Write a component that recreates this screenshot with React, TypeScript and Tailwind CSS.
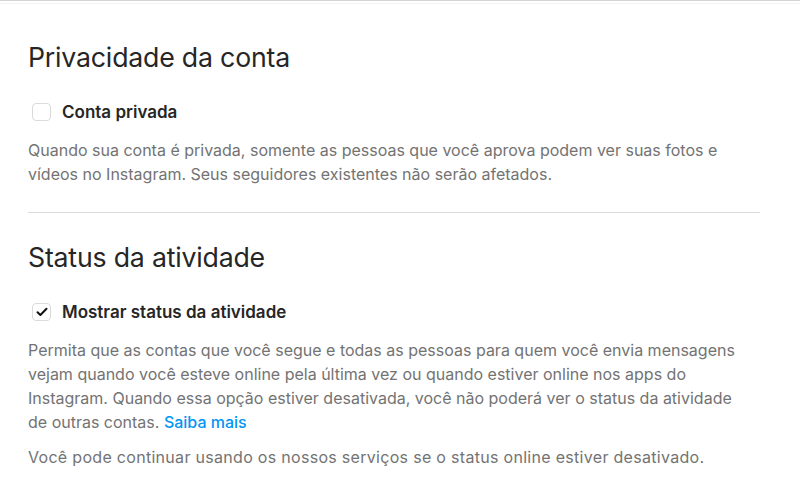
import React from "react";

function Box({ checked }: { checked?: boolean }) {
  return (
    <span className="flex h-[18px] w-[19px] shrink-0 items-center justify-center rounded-[4px] border border-[#dbdbdb] bg-white">
      {checked && (
        <svg width="12" height="10" viewBox="0 0 12 10" fill="none">
          <path d="M1.5 5.2 4.4 8 10.5 1.8" stroke="#111" strokeWidth="2" strokeLinecap="round" strokeLinejoin="round" />
        </svg>
      )}
    </span>
  );
}

export default function App() {
  return (
    <div className="min-h-[492px] bg-white font-['Inter','Liberation_Sans',sans-serif]">
      <div className="h-px bg-[#d4d4d4]" />
      <div className="mt-[2px] h-px bg-[#f3f3f3]" />
      <div className="w-[732px] pl-[28px] box-content">
        <section className="pt-[36px]">
          <h2 className="text-[26.7px] leading-[34px] tracking-[-0.2px] text-[#262626]">Privacidade da conta</h2>
          <label className="mt-[29px] flex items-center gap-[11px] pl-[4px]">
            <Box />
            <span className="text-[17px] font-semibold leading-[18px] text-[#262626]">Conta privada</span>
          </label>
          <p className="mt-[17px] text-[16px] leading-[24px] text-[#737373]">
            Quando sua conta é privada, somente as pessoas que você aprova podem ver suas fotos e vídeos no Instagram. Seus seguidores existentes não serão afetados.
          </p>
        </section>
        <div className="mt-[26px] h-px bg-[#dbdbdb]" />
        <section className="pt-[27px]">
          <h2 className="text-[26.7px] leading-[34px] tracking-[-0.2px] text-[#262626]">Status da atividade</h2>
          <label className="mt-[29px] flex items-center gap-[11px] pl-[4px]">
            <Box checked />
            <span className="text-[17px] font-semibold leading-[18px] text-[#262626]">Mostrar status da atividade</span>
          </label>
          <p className="mt-[17px] text-[16px] leading-[24px] text-[#737373]">
            Permita que as contas que você segue e todas as pessoas para quem você envia mensagens vejam quando você esteve online pela última vez ou quando estiver online nos apps do Instagram. Quando essa opção estiver desativada, você não poderá ver o status da atividade
            <br />
            de outras contas. <a className="font-medium text-[#0095f6]">Saiba mais</a>
          </p>
          <p className="mt-[11px] text-[16px] leading-[24px] tracking-[0.3px] text-[#737373]">
            Você pode continuar usando os nossos serviços se o status online estiver desativado.
          </p>
        </section>
      </div>
    </div>
  );
}
